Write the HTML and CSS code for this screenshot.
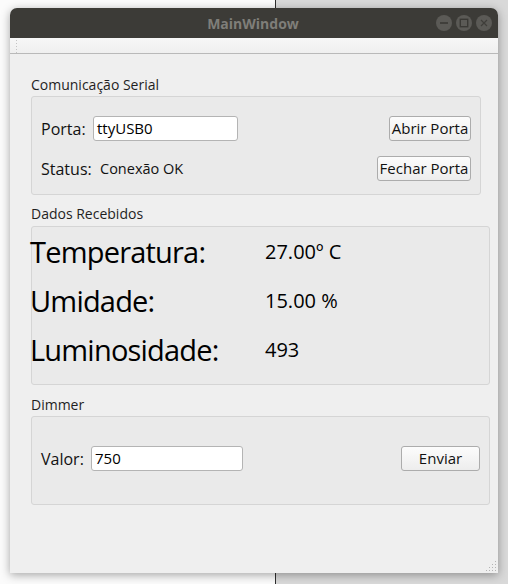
FILE: index.html
```html
<!DOCTYPE html>
<html lang="pt">
<head>
<meta charset="utf-8">
<title>MainWindow</title>
<link rel="stylesheet" href="styles.css">
</head>
<body>
<div class="window">
  <header class="titlebar">
    <span class="title">MainWindow</span>
    <div class="wm-buttons">
      <span class="wm-btn"><svg width="16" height="16" viewBox="0 0 16 16"><line x1="4" y1="8" x2="12" y2="8" stroke="#3a3935" stroke-width="1.6"/></svg></span>
      <span class="wm-btn"><svg width="16" height="16" viewBox="0 0 16 16"><rect x="4.3" y="4.3" width="7.4" height="7.4" fill="none" stroke="#3a3935" stroke-width="1.4"/></svg></span>
      <span class="wm-btn"><svg width="16" height="16" viewBox="0 0 16 16"><path d="M5 5 L11 11 M11 5 L5 11" stroke="#3f3e3a" stroke-width="1.2"/></svg></span>
    </div>
  </header>
  <div class="toolbar"><span class="grip"></span></div>
  <main class="content">
    <section class="group g-serial">
      <div class="group-title">Comunicação Serial</div>
      <div class="group-box box-serial">
        <div class="row">
          <span class="lbl lbl-porta">Porta:</span>
          <span class="input in-porta">ttyUSB0</span>
          <span class="spacer"></span>
          <span class="btn btn-abrir">Abrir Porta</span>
        </div>
        <div class="row">
          <span class="lbl lbl-status">Status:</span>
          <span class="status-val">Conexão OK</span>
          <span class="spacer"></span>
          <span class="btn btn-fechar">Fechar Porta</span>
        </div>
      </div>
    </section>
    <section class="group g-data">
      <div class="group-title">Dados Recebidos</div>
      <div class="group-box box-data">
        <span class="big">Temperatura:</span><span class="val">27.00º C</span>
        <span class="big">Umidade:</span><span class="val">15.00 %</span>
        <span class="big">Luminosidade:</span><span class="val">493</span>
      </div>
    </section>
    <section class="group g-dimmer">
      <div class="group-title">Dimmer</div>
      <div class="group-box box-dimmer">
        <div class="row">
          <span class="lbl lbl-valor">Valor:</span>
          <span class="input in-valor">750</span>
          <span class="spacer"></span>
          <span class="btn btn-enviar">Enviar</span>
        </div>
      </div>
    </section>
  </main>
  <footer class="statusbar">
    <svg class="sizegrip" width="12" height="12" viewBox="0 0 12 12" fill="#b4b4b4">
      <rect x="10" y="1" width="1" height="1"/>
      <rect x="10" y="4" width="1" height="1"/><rect x="7" y="4" width="1" height="1"/>
      <rect x="10" y="7" width="1" height="1"/><rect x="7" y="7" width="1" height="1"/><rect x="4" y="7" width="1" height="1"/>
      <rect x="10" y="10" width="1" height="1"/><rect x="7" y="10" width="1" height="1"/><rect x="4" y="10" width="1" height="1"/><rect x="1" y="10" width="1" height="1"/>
    </svg>
  </footer>
</div>
</body>
</html>
```
FILE: styles.css
```css
* { box-sizing: border-box; }
html, body { margin: 0; padding: 0; }
body {
  width: 508px;
  height: 584px;
  overflow: hidden;
  font-family: "Open Sans", "Noto Sans", sans-serif;
  color: #1c1c1c;
  background: linear-gradient(to right, #fbfbfb 0, #fbfbfb 275px, #2e2e2e 275px, #2e2e2e 276px, #d9d9d9 276px);
  padding: 8px 0 0 10px;
}
.window {
  width: 488px;
  height: 565px;
  display: flex;
  flex-direction: column;
  background: #efefef;
  border-radius: 7px 7px 0 0;
  box-shadow: 0 2px 10px rgba(0,0,0,0.35);
}
.titlebar {
  height: 30px;
  flex: none;
  background: #3c3b37;
  border-radius: 7px 7px 0 0;
  display: flex;
  align-items: center;
  justify-content: center;
  position: relative;
}
.title {
  color: #7f7e79;
  font-weight: 700;
  font-size: 14px;
  margin-left: -2px;
}
.wm-buttons {
  position: absolute;
  right: 6px;
  top: 7px;
  display: flex;
  gap: 4px;
}
.wm-btn {
  width: 16px;
  height: 16px;
  border-radius: 50%;
  background: #5b5a56;
  display: block;
}
.wm-btn svg { display: block; }
.toolbar {
  height: 16px;
  flex: none;
  background: linear-gradient(#f7f7f7, #efefef);
  border-bottom: 1px solid #b9b9b9;
  padding-left: 5px;
}
.grip {
  display: block;
  width: 4px;
  height: 15px;
  background-image: radial-gradient(circle, #c4c4c4 0.8px, transparent 1px);
  background-size: 3px 3px;
  background-position: 0 1px;
}
.content {
  flex: 1;
  padding: 0 8px 0 21px;
}
.group-title {
  font-size: 14px;
  line-height: 20px;
  height: 21px;
  color: #1f1f1f;
}
.g-serial { margin-top: 21px; }
.g-data { margin-top: 9px; }
.g-data .group-title { height: 22px; }
.g-dimmer { margin-top: 10px; }
.group-box {
  background: #eaeaea;
  border: 1px solid #d5d5d5;
  border-radius: 3px;
}
.box-serial {
  width: 450px;
  height: 99px;
  padding: 19px 9px 0 9px;
  display: flex;
  flex-direction: column;
  gap: 15px;
}
.row {
  display: flex;
  align-items: center;
  height: 25px;
}
.spacer { flex: 1; }
.lbl { font-size: 16px; color: #111; }
.lbl-porta { width: 52px; }
.lbl-status { width: 59px; }
.lbl-valor { width: 50px; }
.status-val { font-size: 14.5px; color: #111; }
.input {
  height: 25px;
  background: #fff;
  border: 1px solid #b4b4b4;
  border-radius: 3px;
  font-size: 15px;
  line-height: 23px;
  padding-left: 3px;
  color: #000;
}
.in-porta { width: 145px; }
.in-valor { width: 152px; }
.btn {
  height: 25px;
  border: 1px solid #acacac;
  border-radius: 3px;
  background: linear-gradient(#fcfcfc, #ededed);
  font-size: 15px;
  line-height: 23px;
  text-align: center;
  color: #111;
}
.btn-abrir { width: 82px; }
.btn-fechar { width: 94px; }
.btn-enviar { width: 79px; }
.box-data {
  height: 159px;
  display: grid;
  grid-template-columns: 233px 1fr;
  grid-auto-rows: 49px;
  padding-left: 0;
}
.big {
  font-size: 29px;
  line-height: 49px;
  letter-spacing: -0.8px;
  margin-left: -2px;
  color: #000;
  white-space: nowrap;
}
.val {
  font-size: 20px;
  line-height: 49px;
  color: #000;
}
.box-dimmer {
  height: 89px;
  padding: 29px 9px 0 9px;
}
.statusbar {
  height: 20px;
  flex: none;
  display: flex;
  justify-content: flex-end;
  align-items: flex-end;
  padding: 0 1px 1px 0;
}
.sizegrip { display: block; }
```
